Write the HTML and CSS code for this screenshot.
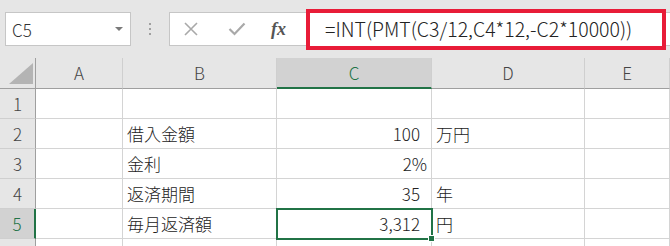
FILE: index.html
```html
<!DOCTYPE html>
<html lang="ja">
<head>
    <meta charset="UTF-8">
    <title>ローン計算</title>
    <link rel="stylesheet" href="styles.css">
</head>
<body>
    <div class="toolbar">
        <div class="namebox">
            <span class="ref">C5</span>
            <span class="caret"></span>
        </div>
        <div class="grip"><i></i><i></i><i></i></div>
        <div class="fbar">
            <div class="fbtns">
                <svg class="ico" width="16" height="14" viewBox="0 0 16 14">
                    <path d="M2 1 L14 13 M14 1 L2 13" stroke="#a9a9a9" stroke-width="1.6" fill="none"/>
                </svg>
                <svg class="ico" width="18" height="14" viewBox="0 0 18 14">
                    <path d="M1.5 7 L6.5 12 L16.5 1.5" stroke="#a9a9a9" stroke-width="2.2" fill="none"/>
                </svg>
                <span class="fx">fx</span>
            </div>
            <div class="formula">=INT(PMT(C3/12,C4*12,-C2*10000))</div>
        </div>
    </div>

    <div class="sheet">
        <!-- header row -->
        <div class="hd corner"><span class="tri"></span></div>
        <div class="hd col">A</div>
        <div class="hd col">B</div>
        <div class="hd col sel">C</div>
        <div class="hd col">D</div>
        <div class="hd col">E</div>

        <div class="hd row">1</div>
        <div class="c"></div><div class="c"></div><div class="c"></div><div class="c"></div><div class="c"></div>

        <div class="hd row">2</div>
        <div class="c"></div><div class="c">借入金額</div><div class="c num">100</div><div class="c">万円</div><div class="c"></div>

        <div class="hd row">3</div>
        <div class="c"></div><div class="c">金利</div><div class="c num pct">2%</div><div class="c"></div><div class="c"></div>

        <div class="hd row">4</div>
        <div class="c"></div><div class="c">返済期間</div><div class="c num">35</div><div class="c">年</div><div class="c"></div>

        <div class="hd row sel">5</div>
        <div class="c"></div><div class="c">毎月返済額</div><div class="c num active">3,312</div><div class="c">円</div><div class="c"></div>

        <div class="hd row"></div>
        <div class="c"></div><div class="c"></div><div class="c"></div><div class="c"></div><div class="c"></div>
    </div>
</body>
</html>
```

FILE: styles.css
```css
body {
    margin: 0;
    width: 670px;
    height: 246px;
    overflow: hidden;
    background: #fff;
    font-family: "Noto Sans CJK JP", "Noto Sans", sans-serif;
    font-weight: 300;
    color: #222;
}
.toolbar {
    height: 58px;
    background: #e6e6e6;
    display: flex;
    align-items: flex-start;
    padding: 12px 0 0 5px;
    box-sizing: border-box;
}
.namebox {
    width: 126px;
    height: 34px;
    box-sizing: border-box;
    background: #fff;
    border: 1px solid #c6c6c6;
    display: flex;
    align-items: center;
    justify-content: space-between;
    padding: 0 7px 0 6px;
}
.namebox .ref {
    font-size: 17px;
    color: #333;
}
.caret {
    width: 0;
    height: 0;
    border-left: 4px solid transparent;
    border-right: 4px solid transparent;
    border-top: 4px solid #7a7a7a;
}
.grip {
    width: 38px;
    height: 34px;
    display: flex;
    flex-direction: column;
    align-items: center;
    justify-content: center;
    gap: 3px;
}
.grip i {
    width: 2px;
    height: 2px;
    background: #a0a0a0;
}
.fbar {
    flex: 1;
    height: 34px;
    box-sizing: border-box;
    background: #fff;
    border: 1px solid #c6c6c6;
    border-right: none;
    display: flex;
    align-items: center;
}
.fbtns {
    width: 136px;
    display: flex;
    align-items: center;
    padding-left: 13px;
    box-sizing: border-box;
}
.fbtns .ico {
    margin-right: 29px;
}
.fbtns .ico + .ico {
    margin-right: 25px;
}
.fx {
    font-family: "Liberation Serif", serif;
    font-style: italic;
    font-weight: bold;
    font-size: 18px;
    color: #555;
}
.formula {
    width: 360px;
    height: 41px;
    flex: none;
    box-sizing: border-box;
    border: 4px solid #e81c38;
    background: #fff;
    padding-left: 15px;
    font-size: 19.5px;
    line-height: 32px;
    color: #222;
    white-space: nowrap;
}
.sheet {
    display: grid;
    grid-template-columns: 36px 87px 154px 155px 153px 85px;
    grid-template-rows: 31px repeat(5, 30px) 8px;
    font-size: 17px;
}
.c {
    border-right: 1px solid #d4d4d4;
    border-bottom: 1px solid #d4d4d4;
    padding: 1px 0 0 4px;
    line-height: 28px;
    white-space: nowrap;
}
.c.num {
    text-align: right;
    padding: 1px 11px 0 0;
}
.c.pct {
    padding-right: 4px;
}
.c.active {
    position: relative;
    z-index: 1;
    outline: 2px solid #217346;
    outline-offset: -1px;
}
.c.active::after {
    content: "";
    position: absolute;
    right: -4px;
    bottom: -4px;
    width: 5px;
    height: 5px;
    background: #217346;
    border: 1px solid #fff;
}
.hd {
    background: #e6e6e6;
    color: #444;
    text-align: center;
    line-height: 30px;
}
.hd.col {
    border-right: 1px solid #cfcfcf;
    border-bottom: 1px solid #9f9f9f;
    line-height: 29px;
}
.hd.row {
    border-right: 1px solid #9f9f9f;
    border-bottom: 1px solid #cfcfcf;
    line-height: 29px;
}
.hd.col.sel {
    background: #d2d2d2;
    color: #217346;
    border-bottom: 2px solid #217346;
}
.hd.row.sel {
    background: #d2d2d2;
    color: #217346;
    border-right: 2px solid #217346;
}
.corner {
    border-right: 1px solid #9f9f9f;
    border-bottom: 1px solid #9f9f9f;
    display: flex;
    align-items: flex-end;
    justify-content: flex-end;
    padding: 0 2px 4px 0;
}
.tri {
    width: 0;
    height: 0;
    border-left: 24px solid transparent;
    border-bottom: 21px solid #b4b4b4;
}
```
